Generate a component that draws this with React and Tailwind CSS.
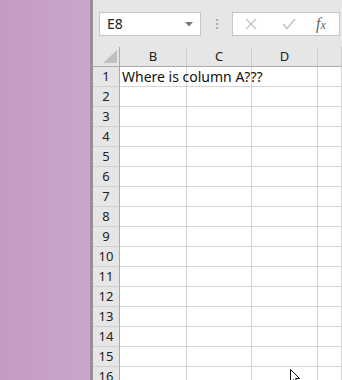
import React from 'react';

const cols = ['B', 'C', 'D', ''];
const rows = Array.from({ length: 16 }, (_, i) => i + 1);

const App = () => {
  return (
    <div className="relative flex w-[342px] h-[380px] overflow-hidden" style={{ fontFamily: '"Noto Sans", "Open Sans", sans-serif' }}>
      <div className="w-[90px] shrink-0 bg-gradient-to-r from-[#c59bc4] to-[#c9a6ca]" />
      <div className="w-[3px] shrink-0 bg-[#9d8a9d]" />
      <div className="flex-1 bg-[#e6e6e6] flex flex-col">
        {/* formula bar */}
        <div className="h-[47px] shrink-0 flex items-start pt-[12px] pl-[6px]">
          <div className="w-[102px] h-[24px] bg-white border border-[#c6c6c6] flex items-center justify-between pl-[7px] pr-[7px]">
            <span className="text-[14px] text-[#222] leading-none">E8</span>
            <svg width="8" height="5" viewBox="0 0 8 5"><path d="M0 0h8L4 4.5z" fill="#777" /></svg>
          </div>
          <div className="w-[31px] h-[24px] flex flex-col items-center justify-center gap-[2px]">
            <span className="w-[2px] h-[2px] bg-[#aaa]" />
            <span className="w-[2px] h-[2px] bg-[#aaa]" />
            <span className="w-[2px] h-[2px] bg-[#aaa]" />
          </div>
          <div className="w-[108px] h-[24px] bg-white border border-[#c6c6c6] flex items-center pl-[12px]">
            <svg width="12" height="12" viewBox="0 0 12 12"><path d="M1 1l10 10M11 1L1 11" stroke="#c3c3c3" strokeWidth="1.4" /></svg>
            <svg className="ml-[25px]" width="14" height="12" viewBox="0 0 14 12"><path d="M1 6l4 4.5L13 1" stroke="#c3c3c3" strokeWidth="1.6" fill="none" /></svg>
            <span className="ml-[20px] text-[16px] italic text-[#666] leading-none" style={{ fontFamily: '"Liberation Serif", serif' }}>f<span className="text-[12px]">x</span></span>
          </div>
        </div>
        {/* sheet */}
        <div className="grid grid-cols-[27px_67px_65px_66px_1fr] text-[13px] text-[#222] leading-none">
          <div className="h-[20px] bg-[#e6e6e6] border-r border-b border-[#ababab] relative">
            <svg className="absolute right-[2px] bottom-[3px]" width="14" height="13" viewBox="0 0 14 13"><path d="M14 0v13H0z" fill="#c0c0c0" /></svg>
          </div>
          {cols.map((c, i) => (
            <div key={i} className="h-[20px] bg-[#e6e6e6] border-r border-b border-r-[#cfcfcf] border-b-[#ababab] flex items-center justify-center">
              {c}
            </div>
          ))}
          {rows.map(r => (
            <React.Fragment key={r}>
              <div className="h-[20px] bg-[#e6e6e6] border-r border-b border-r-[#ababab] border-b-[#cfcfcf] flex items-center justify-center">
                {r}
              </div>
              {cols.map((c, i) => (
                <div key={i} className="h-[20px] bg-white border-r border-b border-[#d4d4d4] relative">
                  {r === 1 && i === 0 && (
                    <span className="absolute z-10 left-[2px] top-[3px] whitespace-nowrap text-[14px] text-[#111]">Where is column A???</span>
                  )}
                </div>
              ))}
            </React.Fragment>
          ))}
        </div>
      </div>
      <svg className="absolute left-[290px] top-[369px]" width="14" height="14" viewBox="0 0 14 14">
        <path d="M0.5 0.5v13l3-3 2 4 2-1-2-4h4z" fill="#fff" stroke="#111" />
      </svg>
    </div>
  );
};

export default App;
